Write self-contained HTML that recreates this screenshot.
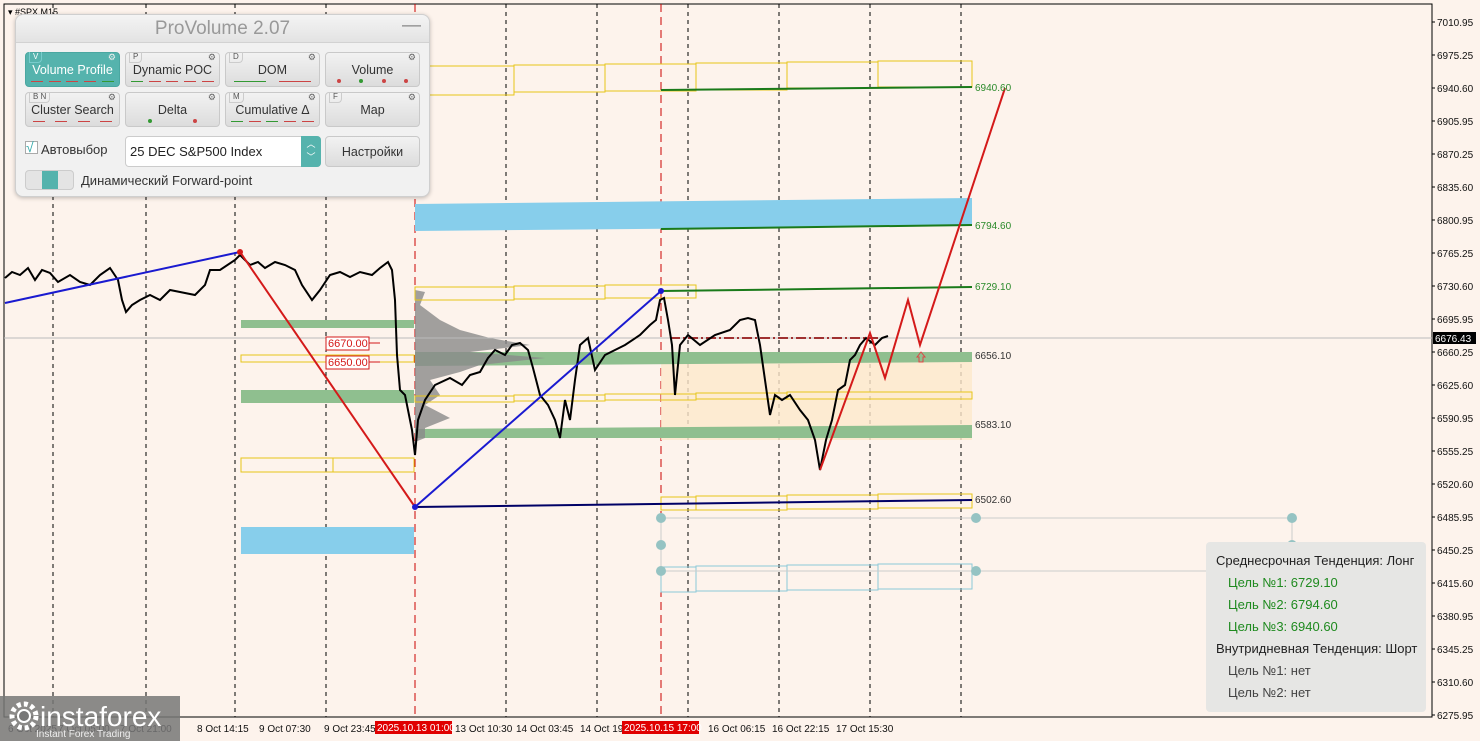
<!DOCTYPE html>
<html><head><meta charset="utf-8"><style>
*{margin:0;padding:0;box-sizing:border-box}
body{width:1480px;height:741px;overflow:hidden;background:#fdf3ec;font-family:"Liberation Sans",sans-serif;position:relative}
#panel{position:absolute;left:15px;top:14px;width:415px;height:183px;background:#f1f1f1;border:1px solid #cfcfcf;border-radius:8px;box-shadow:0 1px 4px rgba(0,0,0,.25)}
#panel .ttl{height:28px;border-bottom:1px solid #d2d2d2;text-align:center;font-size:19px;color:#999;line-height:28px;background:linear-gradient(#f4f4f4,#e3e3e3);border-radius:8px 8px 0 0}
.btn{position:absolute;width:95px;height:35px;border:1px solid #c9c9c9;border-radius:4px;background:linear-gradient(#f2f2f2,#dcdcdc);font-size:12.5px;color:#333;text-align:center;line-height:34px}
.btn.on{background:#55b3ad;color:#fff;border-color:#4aa7a1}
.k{position:absolute;left:3px;top:-1px;font-size:8px;color:#555;line-height:10px;border:1px solid #ccc;border-top:0;padding:0 3px;border-radius:0 0 4px 0}
.g{position:absolute;right:3px;top:-1px;font-size:9px;color:#666;line-height:10px}
.bar{position:absolute;left:2px;right:2px;bottom:2px;height:6px;display:flex;justify-content:space-around;align-items:center}
.bar i{display:block;width:12px;height:1px;background:#c44}
.bar i.gr{background:#393}
.bar b{display:block;width:4px;height:4px;border-radius:2px;background:#c44}
.bar b.gr{background:#393}
#info{position:absolute;left:1206px;top:542px;width:220px;height:170px;background:#e6e6e4;border-radius:4px;font-size:13px;color:#222}
#info div{position:absolute;white-space:nowrap}
</style></head><body>
<svg width="1480" height="741" style="position:absolute;left:0;top:0" xmlns="http://www.w3.org/2000/svg">
<rect x="4" y="4" width="1428" height="713" fill="#fdf3ec" stroke="#000" stroke-width="1"/>
<g stroke="#000" stroke-width="1" stroke-dasharray="4,4">
<line x1="53" y1="4" x2="53" y2="717"/><line x1="146" y1="4" x2="146" y2="717"/><line x1="235" y1="4" x2="235" y2="717"/><line x1="326" y1="4" x2="326" y2="717"/><line x1="506" y1="4" x2="506" y2="717"/><line x1="597" y1="4" x2="597" y2="717"/><line x1="688" y1="4" x2="688" y2="717"/><line x1="779" y1="4" x2="779" y2="717"/><line x1="870" y1="4" x2="870" y2="717"/><line x1="961" y1="4" x2="961" y2="717"/>
</g>
<g stroke="#c00" stroke-width="1" stroke-dasharray="8,5"><line x1="415" y1="4" x2="415" y2="717"/><line x1="661" y1="4" x2="661" y2="717"/></g>
<rect x="661" y="362" width="311" height="78" fill="#fde8cc" opacity=".8"/>
<path d="M415 204 L972 198 L972 226 L415 231Z" fill="#87ceeb"/>
<rect x="241" y="527" width="173" height="27" fill="#87ceeb"/>
<rect x="241" y="320" width="173" height="8" fill="#8fbf8f"/>
<rect x="241" y="390" width="173" height="13" fill="#8fbf8f"/>
<path d="M415 352 L972 352 L972 362 L415 366Z" fill="#8fbf8f"/>
<path d="M415 429 L972 425 L972 438 L415 438Z" fill="#8fbf8f"/>
<path d="M415 290 L425 292 L420 305 L440 320 L460 330 L490 338 L530 345 L470 352 L545 358 L480 365 L460 372 L430 380 L440 395 L425 405 L450 418 L425 428 L425 438 L415 442Z" fill="#8a8a8a" opacity=".8"/>
<g fill="none" stroke="#e6c619" stroke-width="1">
<rect x="415" y="66" width="99" height="29"/><rect x="514" y="65" width="91" height="27"/><rect x="605" y="64" width="91" height="27"/><rect x="696" y="63" width="91" height="27"/><rect x="787" y="62" width="91" height="26"/><rect x="878" y="61" width="94" height="26"/>
<rect x="415" y="287" width="99" height="13"/><rect x="514" y="286" width="91" height="13"/><rect x="605" y="285" width="91" height="13"/>
<rect x="241" y="355" width="173" height="7"/><rect x="241" y="458" width="92" height="14"/><rect x="333" y="458" width="81" height="14"/>
<rect x="415" y="396" width="99" height="6"/><rect x="514" y="395" width="91" height="6"/><rect x="605" y="394" width="91" height="6"/><rect x="696" y="393" width="91" height="6"/><rect x="787" y="392" width="185" height="7"/>
<rect x="661" y="497" width="35" height="13"/><rect x="696" y="496" width="91" height="14"/><rect x="787" y="495" width="91" height="14"/><rect x="878" y="494" width="94" height="14"/>
</g>
<g fill="none" stroke="#8cc8d8" stroke-width="1"><rect x="661" y="567" width="35" height="25"/><rect x="696" y="566" width="91" height="25"/><rect x="787" y="565" width="91" height="25"/><rect x="878" y="564" width="94" height="25"/></g>
<g stroke="#1a7a1a" stroke-width="2" fill="none"><path d="M661 90 L972 87"/><path d="M661 229 L972 225"/><path d="M661 291 L972 287"/></g>
<line x1="415" y1="507" x2="972" y2="500" stroke="#000066" stroke-width="2"/>
<line x1="4" y1="338" x2="1432" y2="338" stroke="#bbb" stroke-width="1"/>
<line x1="670" y1="338" x2="880" y2="338" stroke="#a03030" stroke-width="2" stroke-dasharray="10,3,2,3"/>
<g stroke="#ccc" stroke-width="1"><line x1="661" y1="518" x2="1292" y2="518"/><line x1="661" y1="571" x2="1292" y2="571"/><line x1="1292" y1="518" x2="1292" y2="571"/><line x1="661" y1="518" x2="661" y2="571"/></g>
<g fill="#95c3c3"><circle cx="661" cy="518" r="5"/><circle cx="661" cy="545" r="5"/><circle cx="661" cy="571" r="5"/><circle cx="976" cy="518" r="5"/><circle cx="976" cy="571" r="5"/><circle cx="1292" cy="518" r="5"/><circle cx="1292" cy="545" r="5"/><circle cx="1292" cy="571" r="5"/></g>
<polyline fill="none" stroke="#000" stroke-width="2" points="5,278 12,272 20,275 28,268 35,280 42,270 50,273 58,282 70,275 80,282 90,285 100,275 110,268 118,280 122,300 126,312 132,305 140,300 150,295 160,300 170,290 180,292 195,295 205,285 210,270 220,270 235,260 240,255 250,265 258,262 265,268 275,262 285,265 295,270 302,285 312,300 320,290 330,275 340,272 350,277 360,272 372,275 380,268 388,262 392,270 395,300 397,355 400,390 405,395 408,410 412,430 415,455 418,420 425,400 435,385 450,378 462,385 470,375 480,372 488,358 495,350 505,355 512,345 520,343 528,350 533,368 540,395 548,405 555,420 560,438 565,400 570,420 575,380 580,345 588,338 595,370 605,355 615,350 625,345 640,335 650,325 656,320 660,300 664,298 668,320 672,345 675,395 680,345 688,335 700,345 715,335 730,330 740,320 748,318 755,320 760,345 765,380 770,415 775,395 782,400 790,395 800,410 808,420 815,440 820,470 826,440 832,420 838,390 845,385 850,360 855,355 860,345 866,338 875,345 882,338 888,336"/>
<line x1="5" y1="303" x2="240" y2="252" stroke="#1a1ad0" stroke-width="2"/>
<line x1="415" y1="507" x2="661" y2="291" stroke="#1a1ad0" stroke-width="2"/>
<line x1="240" y1="252" x2="415" y2="507" stroke="#d41a1a" stroke-width="2"/>
<polyline fill="none" stroke="#d41a1a" stroke-width="2" points="820,470 870,333 885,378 908,300 920,345 1005,88"/>
<circle cx="240" cy="252" r="3" fill="#d41a1a"/><circle cx="415" cy="507" r="3" fill="#1a1ad0"/><circle cx="661" cy="291" r="3" fill="#1a1ad0"/>
<path d="M917 357 L921 352 L925 357 L923 357 L923 362 L919 362 L919 357Z" fill="none" stroke="#d44" stroke-width="1"/>
<rect x="326" y="337" width="43" height="13" fill="#fff" stroke="#d41a1a"/><text x="328" y="347" font-size="11" fill="#d41a1a">6670.00</text><line x1="369" y1="343" x2="380" y2="343" stroke="#d41a1a"/>
<rect x="326" y="356" width="43" height="13" fill="#fff" stroke="#d41a1a"/><text x="328" y="366" font-size="11" fill="#d41a1a">6650.00</text><line x1="369" y1="362" x2="380" y2="362" stroke="#d41a1a"/>
<g font-size="10"><text x="975" y="91" fill="#2a8a2a">6940.60</text><text x="975" y="229" fill="#2a8a2a">6794.60</text><text x="975" y="290" fill="#2a8a2a">6729.10</text><text x="975" y="359" fill="#333">6656.10</text><text x="975" y="428" fill="#333">6583.10</text><text x="975" y="503" fill="#333">6502.60</text></g>
<g stroke="#000"><line x1="1432" y1="22" x2="1435" y2="22"/><line x1="1432" y1="55" x2="1435" y2="55"/><line x1="1432" y1="88" x2="1435" y2="88"/><line x1="1432" y1="121" x2="1435" y2="121"/><line x1="1432" y1="154" x2="1435" y2="154"/><line x1="1432" y1="187" x2="1435" y2="187"/><line x1="1432" y1="220" x2="1435" y2="220"/><line x1="1432" y1="253" x2="1435" y2="253"/><line x1="1432" y1="286" x2="1435" y2="286"/><line x1="1432" y1="319" x2="1435" y2="319"/><line x1="1432" y1="352" x2="1435" y2="352"/><line x1="1432" y1="385" x2="1435" y2="385"/><line x1="1432" y1="418" x2="1435" y2="418"/><line x1="1432" y1="451" x2="1435" y2="451"/><line x1="1432" y1="484" x2="1435" y2="484"/><line x1="1432" y1="517" x2="1435" y2="517"/><line x1="1432" y1="550" x2="1435" y2="550"/><line x1="1432" y1="583" x2="1435" y2="583"/><line x1="1432" y1="616" x2="1435" y2="616"/><line x1="1432" y1="649" x2="1435" y2="649"/><line x1="1432" y1="682" x2="1435" y2="682"/><line x1="1432" y1="715" x2="1435" y2="715"/></g>
<g font-size="10" fill="#111">
<text x="1437" y="26">7010.95</text><text x="1437" y="59">6975.25</text><text x="1437" y="92">6940.60</text><text x="1437" y="125">6905.95</text><text x="1437" y="158">6870.25</text><text x="1437" y="191">6835.60</text><text x="1437" y="224">6800.95</text><text x="1437" y="257">6765.25</text><text x="1437" y="290">6730.60</text><text x="1437" y="323">6695.95</text><text x="1437" y="356">6660.25</text><text x="1437" y="389">6625.60</text><text x="1437" y="422">6590.95</text><text x="1437" y="455">6555.25</text><text x="1437" y="488">6520.60</text><text x="1437" y="521">6485.95</text><text x="1437" y="554">6450.25</text><text x="1437" y="587">6415.60</text><text x="1437" y="620">6380.95</text><text x="1437" y="653">6345.25</text><text x="1437" y="686">6310.60</text><text x="1437" y="719">6275.95</text>
</g>
<rect x="1433" y="332" width="43" height="12" fill="#000"/><text x="1435" y="342" font-size="10" fill="#fff">6676.43</text>
<g font-size="10" fill="#111">
<text x="8" y="732">6 Oct 2025</text><text x="58" y="732">7 Oct 05:00</text><text x="120" y="732">7 Oct 21:00</text><text x="197" y="732">8 Oct 14:15</text><text x="259" y="732">9 Oct 07:30</text><text x="324" y="732">9 Oct 23:45</text><text x="455" y="732">13 Oct 10:30</text><text x="516" y="732">14 Oct 03:45</text><text x="580" y="732">14 Oct 19</text><text x="708" y="732">16 Oct 06:15</text><text x="772" y="732">16 Oct 22:15</text><text x="836" y="732">17 Oct 15:30</text>
</g>
<rect x="375" y="721" width="77" height="13" fill="#e00000"/><text x="377" y="731" font-size="10" fill="#fff">2025.10.13 01:00</text>
<rect x="622" y="721" width="77" height="13" fill="#e00000"/><text x="624" y="731" font-size="10" fill="#fff">2025.10.15 17:00</text>
<text x="8" y="15" font-size="9" fill="#000">▾ #SPX,M15</text>
<rect x="0" y="696" width="180" height="45" fill="#777" opacity=".85"/>
<circle cx="24" cy="716" r="12" fill="none" stroke="#fff" stroke-width="5" stroke-dasharray="4,3"/>
<circle cx="24" cy="716" r="6" fill="#777" stroke="#fff" stroke-width="2"/>
<text x="40" y="726" font-size="28" fill="#fff" font-family="Liberation Sans">instaforex</text>
<text x="36" y="737" font-size="10" fill="#eee">Instant Forex Trading</text>
</svg>
<div id="panel">
<div class="ttl">ProVolume 2.07<span style="position:absolute;right:8px;top:-3px;color:#888">—</span></div>
<div class="btn on" style="left:9px;top:37px"><span class="k" style="color:#fff;border-color:#7cc">V</span><span class="g" style="color:#eee">⚙</span>Volume Profile<div class="bar"><i></i><i></i><i></i><i></i><i class="gr"></i></div></div>
<div class="btn" style="left:109px;top:37px"><span class="k">P</span><span class="g">⚙</span>Dynamic POC<div class="bar"><i class="gr"></i><i></i><i></i><i></i><i></i></div></div>
<div class="btn" style="left:209px;top:37px"><span class="k">D</span><span class="g">⚙</span>DOM<div class="bar"><i class="gr" style="width:32px"></i><i style="width:32px"></i></div></div>
<div class="btn" style="left:309px;top:37px"><span class="g">⚙</span>Volume<div class="bar"><b></b><b class="gr"></b><b></b><b></b></div></div>
<div class="btn" style="left:9px;top:77px"><span class="k">B N</span><span class="g">⚙</span>Cluster Search<div class="bar"><i></i><i></i><i></i><i></i></div></div>
<div class="btn" style="left:109px;top:77px"><span class="g">⚙</span>Delta<div class="bar"><b class="gr"></b><b></b></div></div>
<div class="btn" style="left:209px;top:77px"><span class="k">M</span><span class="g">⚙</span>Cumulative Δ<div class="bar"><i class="gr"></i><i></i><i class="gr"></i><i></i><i></i></div></div>
<div class="btn" style="left:309px;top:77px"><span class="k">F</span><span class="g">⚙</span>Map</div>
<div style="position:absolute;left:9px;top:126px;width:13px;height:13px;border:1px solid #aaa;background:#fff;font-size:14px;color:#3aa;line-height:11px">√</div>
<div style="position:absolute;left:25px;top:127px;font-size:13px;color:#333">Автовыбор</div>
<div style="position:absolute;left:109px;top:121px;width:196px;height:31px;border:1px solid #ccc;border-radius:4px;background:#fff;font-size:13px;color:#222;line-height:29px;padding-left:4px">25 DEC S&amp;P500 Index<div style="position:absolute;right:-1px;top:-1px;width:20px;height:31px;background:#55b3ad;border-radius:0 4px 4px 0;color:#fff;font-size:9px;line-height:13px;text-align:center;padding-top:2px">︿<br>﹀</div></div>
<div class="btn" style="left:309px;top:121px;height:31px;line-height:30px">Настройки</div>
<div style="position:absolute;left:9px;top:155px;width:49px;height:20px;border:1px solid #ccc;border-radius:4px;background:#e4e4e4"><div style="position:absolute;left:16px;top:0;width:16px;height:18px;background:#55b3ad"></div></div>
<div style="position:absolute;left:65px;top:158px;font-size:13px;color:#333">Динамический Forward-point</div>
</div>
<div id="info">
<div style="left:10px;top:11px">Среднесрочная Тенденция: Лонг</div>
<div style="left:22px;top:33px;color:#1f8a1f">Цель №1: 6729.10</div>
<div style="left:22px;top:55px;color:#1f8a1f">Цель №2: 6794.60</div>
<div style="left:22px;top:77px;color:#1f8a1f">Цель №3: 6940.60</div>
<div style="left:10px;top:99px">Внутридневная Тенденция: Шорт</div>
<div style="left:22px;top:121px;color:#444">Цель №1: нет</div>
<div style="left:22px;top:143px;color:#444">Цель №2: нет</div>
</div>
</body></html>
